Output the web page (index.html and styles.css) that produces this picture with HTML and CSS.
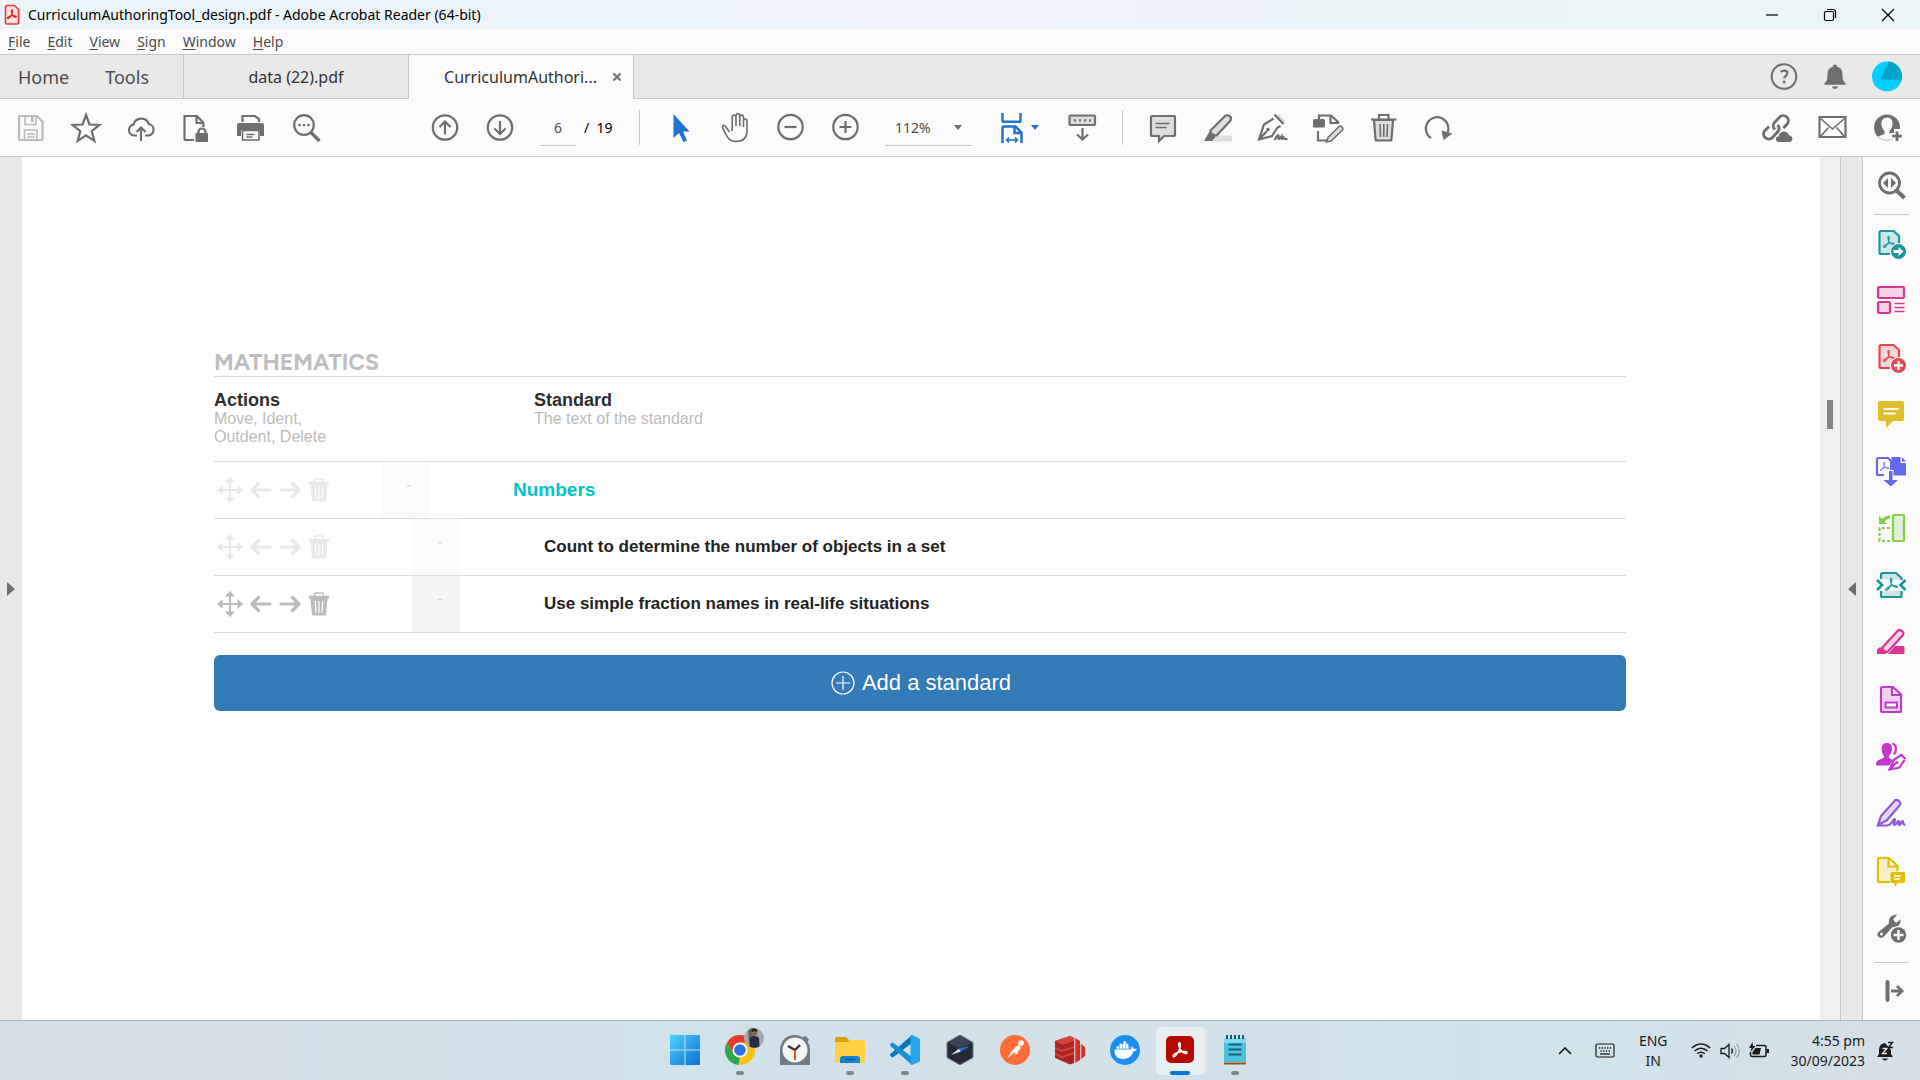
FILE: index.html
```html
<!DOCTYPE html>
<html lang="en">
<head>
    <meta charset="UTF-8">
    <meta name="viewport" content="width=device-width, initial-scale=1.0">
    <title>CurriculumAuthoringTool_design.pdf - Adobe Acrobat Reader (64-bit)</title>
    <link rel="stylesheet" href="styles.css">
</head>
<body>
    <svg class="sprite" aria-hidden="true">
        <symbol id="pdf-mark" viewBox="0 0 16 16">
            <path d="M7.500 1.500c1.300 0 .9 3.700-.3 6.700C6 11 3.500 14.500 2 14c-1.300-1.200 3-4 6.500-4.500 3-.5 6-.2 5.800 1-.3 1.300-3.300.3-5-1.500C7 6.500 6 1.500 7.500 1.500z" fill="none" stroke="currentColor" stroke-width="1.300"/>
        </symbol>
        <symbol id="row-move" viewBox="0 0 26 26">
            <path d="M13 0l5 5.500H8zM13 26l5-5.500H8zM0 13l5.500-5v10zM26 13l-5.500-5v10z"/>
            <path d="M13 4v18M4 13h18" stroke="currentColor" stroke-width="2"/>
        </symbol>
        <symbol id="row-left" viewBox="0 0 22 18">
            <path d="M20 9H3M8.500 2.500L2 9l6.500 6.500" fill="none" stroke="currentColor" stroke-width="3.200" stroke-linecap="round" stroke-linejoin="round"/>
        </symbol>
        <symbol id="row-right" viewBox="0 0 22 18">
            <path d="M2 9h17M13.500 2.500L20 9l-6.500 6.500" fill="none" stroke="currentColor" stroke-width="3.200" stroke-linecap="round" stroke-linejoin="round"/>
        </symbol>
        <symbol id="row-trash" viewBox="0 0 22 24">
            <path d="M6.500 4V2q0-1 1-1h7q1 0 1 1v2" fill="none" stroke="currentColor" stroke-width="1.300"/>
            <path d="M1 3.800h20v3H1zM2.500 6.500h17l-1.300 15.500q-.2 1.500-1.500 1.500H5.300q-1.300 0-1.500-1.500z"/>
            <path d="M7.300 9l.6 11.500M11 9v11.500M14.700 9l-.6 11.500" stroke="#fff" stroke-width="1.200"/>
        </symbol>
    </svg>

    <header class="titlebar">
        <svg class="app-icon" viewBox="0 0 16 22">
            <path d="M2.500 1.500h8l4 4v13q0 1.500-1.500 1.500H3q-1.500 0-1.500-1.500V3q0-1.500 1-1.500z" fill="#ffe3e0" stroke="#f0362b" stroke-width="1.500"/>
            <path d="M8 6c1.200 0 .5 3-.8 5.200C6 13.500 4 15 3.500 14.300c-.4-1 2-2.200 4.500-2.500 2.500-.2 4.500.2 4.400 1-.3 1-2.500.2-3.700-1.200C7.400 10 7 6 8 6z" fill="none" stroke="#e02a20" stroke-width="1.300"/>
        </svg>
        <h1 class="window-title">CurriculumAuthoringTool_design.pdf - Adobe Acrobat Reader (64-bit)</h1>
        <div class="window-controls">
            <button aria-label="Minimize"><svg viewBox="0 0 14 14"><path d="M1 7h12"/></svg></button>
            <button aria-label="Restore"><svg viewBox="0 0 14 14"><rect x="1.500" y="3.500" width="9" height="9" rx="1.500"/><path d="M4 1.500h6q2.500 0 2.500 2.500v6"/></svg></button>
            <button aria-label="Close"><svg viewBox="0 0 14 14"><path d="M1 1l12 12M13 1L1 13"/></svg></button>
        </div>
    </header>

    <nav class="menubar">
        <button><u>F</u>ile</button>
        <button><u>E</u>dit</button>
        <button><u>V</u>iew</button>
        <button><u>S</u>ign</button>
        <button><u>W</u>indow</button>
        <button><u>H</u>elp</button>
    </nav>

    <div class="tabbar">
        <div class="main-tabs">
            <button>Home</button>
            <button>Tools</button>
        </div>
        <button class="doc-tab">data (22).pdf</button>
        <div class="doc-tab active">
            <span>CurriculumAuthori...</span>
            <button class="close-tab" aria-label="Close tab"><svg viewBox="0 0 10 10"><path d="M1.500 1.500l7 7M8.500 1.500l-7 7"/></svg></button>
        </div>
        <div class="account">
            <button aria-label="Help">
                <svg viewBox="0 0 32 32"><circle cx="17" cy="15.500" r="12.300" fill="none" stroke="currentColor" stroke-width="2"/><path d="M13.700 11q1.500-1.300 3.500-1.300 3.200 0 3.200 2.600c0 2.400-3.200 2.600-3.200 5.200" fill="none" stroke="currentColor" stroke-width="2.200"/><circle cx="17.200" cy="21" r="1.500"/></svg>
            </button>
            <button aria-label="Notifications">
                <svg viewBox="0 0 32 32"><path d="M16 3.500q2 0 2 2.200c4 .9 5.500 3.800 5.500 8 0 4.800.8 6.800 3 8.300v1.700h-21V22c2.200-1.500 3-3.500 3-8.300 0-4.200 1.500-7.100 5.500-8q0-2.200 2-2.200zM13 25.500h6q-.5 2.500-3 2.500t-3-2.500z"/></svg>
            </button>
            <button aria-label="Profile">
                <svg viewBox="0 0 32 32"><circle cx="16" cy="15.500" r="15" fill="#00d0ff"/><path d="M17.500.5A15 15 0 0 1 30.800 18L29 21.500q-1-3-3-3H9.500z" fill="#00a3cc"/></svg>
            </button>
        </div>
    </div>

    <div class="toolbar">
        <div class="tools">
            <button class="disabled" aria-label="Save"><svg viewBox="0 0 32 32"><path d="M5 4h17l5.500 5.500V27q0 1-1 1H5q-1 0-1-1V5q0-1 1-1z" fill="none" stroke="currentColor" stroke-width="2.200"/><path d="M10 4v8.500h11V4M9.500 28V18h12.500v10M12 22h8M12 25h8" fill="none" stroke="currentColor" stroke-width="1.600"/><path d="M16 5h2.500v5H16z"/></svg></button>
            <button aria-label="Favourite"><svg viewBox="0 0 32 32"><path d="M16 3l3.500 9.500 10 .4-7.800 6.300 2.700 9.800L16 23.300 7.600 29l2.700-9.800-7.800-6.300 10-.4z" class="line"/></svg></button>
            <button aria-label="Upload"><svg viewBox="0 0 32 32"><path d="M12 23.500H9A5.500 5.500 0 0 1 8.500 12.600 8 8 0 0 1 23.800 12 5.800 5.800 0 0 1 23 23.500h-3M16 29V16M11.500 20l4.500-4.500 4.500 4.500" class="line"/></svg></button>
            <button aria-label="Protect"><svg viewBox="0 0 32 32"><path d="M14 28H6q-1.500 0-1.500-1.500V4h12.500l6.500 7v4M16.500 4v7H23" class="line"/><path d="M18.500 22v-2a3.500 3.500 0 0 1 7 0v2" class="line"/><rect x="15.500" y="21" width="12.500" height="9" rx="1"/></svg></button>
            <button aria-label="Print"><svg viewBox="0 0 32 32"><path d="M7.500 10V4H20l4 3v3" class="line"/><path d="M4 11h23q2 0 2 2v11h-4v-6H6v6H2V13q0-2 2-2z"/><path d="M7.500 18.500H24V28H7.500zM11.500 22.500h8M11.500 25h6" class="line thin"/></svg></button>
            <button aria-label="Find"><svg viewBox="0 0 32 32"><circle cx="14" cy="13" r="9.800" class="line"/><path d="M21 20.500l8.500 8.500" stroke="currentColor" stroke-width="3.200"/><circle cx="9.500" cy="13" r="1.300"/><circle cx="14" cy="13" r="1.300"/><circle cx="18.500" cy="13" r="1.300"/></svg></button>
        </div>
        <div class="tools paging">
            <button aria-label="Previous page"><svg viewBox="0 0 32 32"><circle cx="16" cy="15.500" r="12.200" class="line"/><path d="M16 22.500V10M10.500 15L16 9.500l5.500 5.500" class="line"/></svg></button>
            <button aria-label="Next page"><svg viewBox="0 0 32 32"><circle cx="16" cy="15.500" r="12.200" class="line"/><path d="M16 9v13M10.500 16.500l5.500 5.500 5.500-5.500" class="line"/></svg></button>
            <input class="page-input" type="text" value="6" aria-label="Page number">
            <span class="page-total">/&nbsp; 19</span>
        </div>
        <div class="divider"></div>
        <div class="tools">
            <button class="selected" aria-label="Select"><svg viewBox="0 0 32 32"><path d="M8.500 2v24l5.500-5 4.500 9 3.500-1.500-4-9h6.500z"/></svg></button>
            <button aria-label="Pan"><svg viewBox="0 0 32 32"><path d="M9.500 20L5.500 14.500C3.800 12 1.500 14 3 16.500c3 5 4 13 13 13 8 0 11-4 11-11V9c0-2.500-3.500-2.500-3.500 0v6V5c0-2.500-3.700-2.500-3.700 0v9V3.500c0-2.500-3.800-2.500-3.800 0V14 5c0-2.500-3.800-2.500-3.800 0v14" class="line thin"/></svg></button>
            <button aria-label="Zoom out"><svg viewBox="0 0 32 32"><circle cx="15.500" cy="15" r="12.200" class="line"/><path d="M9.500 15h12" class="line"/></svg></button>
            <button aria-label="Zoom in"><svg viewBox="0 0 32 32"><circle cx="15.500" cy="15" r="12.200" class="line"/><path d="M9.500 15h12M15.500 9v12" class="line"/></svg></button>
        </div>
        <div class="zoom-field">
            <select aria-label="Zoom level"><option>112%</option></select>
            <svg class="caret" viewBox="0 0 8 5"><path d="M0 0h8L4 5z"/></svg>
        </div>
        <button class="fit selected" aria-label="Fit width">
            <svg viewBox="0 0 32 32"><path d="M6.500 1v7.500q0 1.300 1.300 1.300h15.400q1.300 0 1.300-1.300V1M6.500 31V16q0-1.500 1.500-1.500h11.500l6 6V31M18.500 14.500v6.500h6" fill="none" stroke="currentColor" stroke-width="2.500"/><path d="M11 28h10M13 25.500L10.500 28l2.500 2.500M19 25.500l2.500 2.500-2.500 2.500" fill="none" stroke="currentColor" stroke-width="1.600"/></svg>
            <svg class="caret" viewBox="0 0 8 5"><path d="M0 0h8L4 5z"/></svg>
        </button>
        <div class="tools">
            <button aria-label="Scrolling"><svg viewBox="0 0 32 32"><rect x="2.500" y="3.500" width="25.500" height="9.500" rx="1" class="line tint"/><path d="M7 8.300h2M12 8.300h2M17 8.300h2M22 8.300h2M15.500 16v11.500M10 22.500l5.500 5 5.500-5" class="line"/></svg></button>
        </div>
        <div class="divider"></div>
        <div class="tools">
            <button aria-label="Comment"><svg viewBox="0 0 32 32"><path d="M5.500 4h21q1.500 0 1.500 1.500v17q0 1.500-1.500 1.500H17l-5 5v-5H5.500Q4 24 4 22.500v-17Q4 4 5.500 4z" class="line tint"/><path d="M8.500 11.500h14M8.500 15.500h11" class="line thin"/></svg></button>
            <button aria-label="Highlight"><svg viewBox="0 0 32 32"><path d="M13 23.500h17v6H10z" fill="#dedede"/><path d="M8.500 18.500L23 4q2-1.500 4.500 0t1 4.500L15 23q-2 1-4.500-.5t-2-4z" class="line tint"/><path d="M7.500 19.500l6 5.500-3.500 4H2z"/></svg></button>
            <button aria-label="Sign"><svg viewBox="0 0 32 32"><path d="M19 4l7.500 8 2-3-6-6.500z" fill="#dedede"/><path d="M17.500 2.500l9 9.500M16.500 6.500L7 12.500 2 27.500l13-3.500 5.500-8.500 3-1.500M2.500 27l7.500-8" class="line"/><circle cx="11" cy="17.500" r="1.800"/><path d="M17.500 28c2-3 4.500-7 4-3.500-.5 4 1.500 2 3 0 0 4 1.500 2.500 2 0 .3 2.500 1.500 3 4 2.500" class="line"/></svg></button>
            <button aria-label="Edit"><svg viewBox="0 0 32 32"><path d="M7 7V3.500h12l7 6.500v2M18.500 3.500V11H25M6 19v9.500h9" class="line"/><rect x="1" y="7" width="12" height="8.500" rx="1.500"/><path d="M16 25.500L27 14.500q1.500-1 3 .5t.5 3L19 29l-4.500 1z" class="line thin tint"/></svg></button>
            <button aria-label="Delete"><svg viewBox="0 0 32 32"><path d="M7 8l1.500 19q0 1.500 1.500 1.500h13q1.500 0 1.500-1.500L26 8z" class="line tint"/><path d="M4 7.500h25.500M12 6.500V3h9.500v3.500" class="line"/><path d="M13 12l.5 13M16.800 12v13M20.500 12L20 25" class="line thin"/></svg></button>
            <button aria-label="Rotate"><svg viewBox="0 0 32 32"><path d="M9 26A11.300 11.300 0 1 1 25.500 21" class="line"/><path d="M19.500 18.500l11 3-9 6.500z"/></svg></button>
        </div>
        <div class="tools share">
            <button aria-label="Share link"><svg viewBox="0 0 32 32"><path d="M13 17.500a5 5 0 0 1-.5-7l5-5.200a5 5 0 0 1 7.500 7l-3.500 3.700M15.500 13a5 5 0 0 1 .5 6.500l-5.500 6a5 5 0 0 1-7.500-7l4-4" class="line heavy"/><path d="M17 30c-4 0-4.500-5.500-.5-5.500 1-6.500 9-6.500 10.500-1.200 4.500.5 4.500 6.700 0 6.700z"/></svg></button>
            <button aria-label="Email"><svg viewBox="0 0 32 32"><path d="M2.500 5h26v20h-26z" class="line"/><path d="M3.500 6.500l12 10.500 12-10.500M3.500 24.500l8-9M27.500 24.500l-8-9" class="line thin"/></svg></button>
            <button aria-label="Invite"><svg viewBox="0 0 32 32"><circle cx="15" cy="15.500" r="13"/><path d="M15 5.500c-4 0-6 3-5.500 7 .3 3 1.300 5 3 6.500v3L6 24.500Q9.500 28 15 28q4 0 6-1.500v-3L17.500 22v-3c1.700-1.500 2.700-3.500 3-6.500.5-4-1.500-7-5.500-7z" fill="#fbfbfb"/><path d="M25 17v14M18 24h14" stroke="#fbfbfb" stroke-width="6"/><path d="M25 19.500V29M20.200 24.200h9.600" class="line heavy"/></svg></button>
        </div>
    </div>

    <div class="workspace">
        <button class="pane-toggle left" aria-label="Show navigation pane"><svg viewBox="0 0 8 14"><path d="M0 0l8 7-8 7z"/></svg></button>

        <main class="page">
            <h2 class="subject">MATHEMATICS</h2>
            <table class="standards">
                <thead>
                    <tr>
                        <th class="actions-head">Actions<small>Move, Ident,<br>Outdent, Delete</small></th>
                        <th class="standard-head">Standard<small>The text of the standard</small></th>
                    </tr>
                </thead>
                <tbody>
                    <tr class="faded">
                        <td>
                            <div class="row-actions">
                                <button aria-label="Move"><svg class="move"><use href="#row-move"/></svg></button>
                                <button aria-label="Outdent"><svg class="arrow"><use href="#row-left"/></svg></button>
                                <button aria-label="Indent"><svg class="arrow"><use href="#row-right"/></svg></button>
                                <button aria-label="Delete"><svg class="trash"><use href="#row-trash"/></svg></button>
                            </div>
                        </td>
                        <td>
                            <div class="entry level-1"><span class="handle">-</span><span class="text">Numbers</span></div>
                        </td>
                    </tr>
                    <tr class="faded">
                        <td>
                            <div class="row-actions">
                                <button aria-label="Move"><svg class="move"><use href="#row-move"/></svg></button>
                                <button aria-label="Outdent"><svg class="arrow"><use href="#row-left"/></svg></button>
                                <button aria-label="Indent"><svg class="arrow"><use href="#row-right"/></svg></button>
                                <button aria-label="Delete"><svg class="trash"><use href="#row-trash"/></svg></button>
                            </div>
                        </td>
                        <td>
                            <div class="entry level-2"><span class="handle">-</span><span class="text">Count to determine the number of objects in a set</span></div>
                        </td>
                    </tr>
                    <tr>
                        <td>
                            <div class="row-actions">
                                <button aria-label="Move"><svg class="move"><use href="#row-move"/></svg></button>
                                <button aria-label="Outdent"><svg class="arrow"><use href="#row-left"/></svg></button>
                                <button aria-label="Indent"><svg class="arrow"><use href="#row-right"/></svg></button>
                                <button aria-label="Delete"><svg class="trash"><use href="#row-trash"/></svg></button>
                            </div>
                        </td>
                        <td>
                            <div class="entry level-2"><span class="handle">-</span><span class="text">Use simple fraction names in real-life situations</span></div>
                        </td>
                    </tr>
                </tbody>
            </table>
            <button class="add-standard">
                <svg viewBox="0 0 24 24"><circle cx="12" cy="12" r="11"/><path d="M12 5v14M5 12h14"/></svg>
                Add a standard
            </button>
        </main>

        <div class="scrollbar"><div class="thumb"></div></div>
        <button class="pane-toggle right" aria-label="Hide tools pane"><svg viewBox="0 0 8 14"><path d="M8 0L0 7l8 7z"/></svg></button>

        <aside class="tool-pane">
            <button aria-label="Search tools"><svg viewBox="0 0 32 32"><circle cx="14.500" cy="14" r="10" class="line heavy"/><path d="M21.500 21.500l8 7.500" stroke="currentColor" stroke-width="4"/><path d="M13 9v10l-5-5zM16 9v10l5-5z"/></svg></button>
            <hr>
            <button class="teal" aria-label="Export PDF"><svg viewBox="0 0 32 32"><path d="M15 27H6q-1.500 0-1.500-1.500v-20Q4.500 4 6 4h12.500l5.500 5v8" class="line tone"/><svg x="7" y="8" width="14" height="14"><use href="#pdf-mark"/></svg><circle cx="23.500" cy="24.500" r="8.500" fill="#fbfbfb"/><circle cx="23.500" cy="24.500" r="7.500"/><path d="M18.500 23h5v-3l5 4.500-5 4.500v-3h-5z" fill="#fff"/></svg></button>
            <button class="pink" aria-label="Organize pages"><svg viewBox="0 0 32 32"><rect x="3" y="3" width="26" height="11" rx="1" class="line tone"/><rect x="3" y="18" width="12" height="11" rx="1" class="line tone"/><path d="M19.500 19.500h10M19.500 23.500h10M19.500 27.500h10" class="line thin"/></svg></button>
            <button class="red" aria-label="Create PDF"><svg viewBox="0 0 32 32"><path d="M15 27H6q-1.500 0-1.500-1.500v-20Q4.500 4 6 4h12.500l5.500 5v8" class="line tone"/><svg x="7" y="8" width="14" height="14"><use href="#pdf-mark"/></svg><circle cx="23.500" cy="24.500" r="8.500" fill="#fbfbfb"/><circle cx="23.500" cy="24.500" r="7.500"/><path d="M23.500 20v9M19 24.500h9" stroke="#fff" stroke-width="2.500"/></svg></button>
            <button class="yellow" aria-label="Comment"><svg viewBox="0 0 32 32"><path d="M5 3h22q2 0 2 2v16q0 2-2 2h-9l-7 7v-7H5q-2 0-2-2V5q0-2 2-2z"/><path d="M8.500 11h15M8.500 15.500h12" stroke="#fff" stroke-width="2"/></svg></button>
            <button class="indigo" aria-label="Combine files"><svg viewBox="0 0 32 32"><path d="M16.500 2h9v6H31v12.500H16.500zM27 2l4 4.500h-4z"/><path d="M9 20H3.500Q2 20 2 18.500V4.500Q2 3 3.500 3H13l3 3v13" class="line paper"/><svg x="4" y="6" width="11" height="11"><use href="#pdf-mark"/></svg><path d="M12.500 15h6v15h-6z" fill="#fbfbfb"/><path d="M14 16h3.500v9H23l-7.200 6.500L8.500 25H14z"/></svg></button>
            <button class="green" aria-label="Compare files"><svg viewBox="0 0 32 32"><rect x="18" y="3" width="11" height="26" rx="1" class="line tone"/><path d="M15 16H4.500v13H15" class="line" stroke-dasharray="3 2.200"/><path d="M4 4v8h8L9.500 9.500Q11 7.500 15 6V3q-5 1-8 3.800z"/></svg></button>
            <button class="teal" aria-label="Compress PDF"><svg viewBox="0 0 32 32"><path d="M6 10V5.500Q6 4 7.500 4H21l5.500 5v2M6 22v4.500Q6 28 7.500 28H25q1.500 0 1.500-1.500V22" class="line tone"/><svg x="9" y="8" width="15" height="15"><use href="#pdf-mark"/></svg><path d="M2 11l5 5-5 5M30.500 11l-5 5 5 5" class="line heavy"/></svg></button>
            <button class="pink" aria-label="Redact"><svg viewBox="0 0 32 32"><path d="M7 22L22.500 5q2-2 4.500 0t.5 4.500L12.500 26q-3 .5-5.500-4z" class="line tone"/><path d="M5 21l6.500 7H2v-4.500zM20 20h8q1.500 0 1.500 1.500V28H13z"/></svg></button>
            <button class="magenta" aria-label="Prepare form"><svg viewBox="0 0 32 32"><path d="M7.500 4H18l8 7.500v16q0 1.500-1.500 1.500h-17Q6 29 6 27.500v-22Q6 4 7.500 4zM17 4.500V12h8" class="line tone"/><path d="M10.500 19.500h11.500v5H10.500z" fill="#fff" stroke="currentColor" stroke-width="2"/></svg></button>
            <button class="magenta" aria-label="Request signatures"><svg viewBox="0 0 32 32"><path d="M12 3c4 0 5.500 3 5 6.500-.3 3-1.500 5-3 6.500v2l4 2-4 5.500H1c0-4 1-5 5-6.500l3-1.500V16c-1.500-1.500-2-3.500-2.300-6.500C6.300 6 8 3 12 3z"/><path d="M17.500 3.500c4 1 4.500 7 1.500 11" class="line"/><path d="M30.500 19l-5-5M26 15.500l-7 4L14.500 29.500l10-2 5-7.500M15 29l6-6" class="line"/><circle cx="22" cy="22.500" r="1.500"/></svg></button>
            <button class="purple" aria-label="Fill and sign"><svg viewBox="0 0 32 32"><path d="M3 28l3-9L19.500 4q2-2 4.500 0t.5 4.500L11.500 23.500z" class="line tone"/><path d="M3 28.500h9c4 0 6-6 7.500-6.500 2 0-2.500 6 0 6s2-4 4-4-1 4.500 1 4 1.500-4 3-4-1 4 3 3.500" class="line"/></svg></button>
            <button class="gold" aria-label="Send for comments"><svg viewBox="0 0 32 32"><path d="M15 28H4.500Q3 28 3 26.500v-21Q3 4 4.500 4H14l8.500 8v5M13.500 4v8.500H22" class="line tone"/><path d="M17 18h11.500q1.500 0 1.500 1.500v8q0 1.500-1.500 1.500H23l-3.500 3.500V29H17q-1.500 0-1.500-1.500v-8Q15.500 18 17 18z"/><path d="M19 22h7M19 25h6" stroke="#fff" stroke-width="1.500"/></svg></button>
            <button aria-label="More tools"><svg viewBox="0 0 32 32"><path d="M3.500 21L14 12.500c-1-5 3-9.500 8-8.500l-4 4.500 3 3.500 4.500-3.500c.5 5-3 8.500-8 7.500L9 25.500c-3 3.500-9-.5-5.500-4.500z"/><circle cx="6.500" cy="23" r="1.500" fill="#fbfbfb"/><circle cx="23.500" cy="24" r="9" fill="#fbfbfb"/><circle cx="23.500" cy="24" r="7.700"/><path d="M23.500 19v10M18.500 24h10" stroke="#fff" stroke-width="2.500"/></svg></button>
            <hr class="last">
            <button aria-label="Collapse"><svg viewBox="0 0 32 32"><path d="M12.500 7v18" stroke="currentColor" stroke-width="4" stroke-linecap="round"/><path d="M16 16h11M22 11l5 5-5 5" class="line heavy"/></svg></button>
        </aside>
    </div>

    <footer class="taskbar">
        <div class="apps">
            <button aria-label="Start"><svg viewBox="0 0 30 30"><defs><linearGradient id="win" x2="1" y2="1"><stop stop-color="#4fd2ff"/><stop offset="1" stop-color="#0a6fd0"/></linearGradient></defs><path d="M0 1q0-1 1-1h13.500v14.500H0zM15.500 0H29q1 0 1 1v13.500H15.500zM0 15.500h14.500V30H1q-1 0-1-1zM15.500 15.500H30V29q0 1-1 1H15.500z" fill="url(#win)"/></svg></button>
            <button class="open" aria-label="Chrome">
                <svg viewBox="0 0 30 30"><circle cx="15" cy="15" r="15" fill="#fbc116"/><path d="M2 7.500A15 15 0 0 1 28 7.500H15L8.500 18.700z" fill="#e33b2e"/><path d="M2 7.500L8.500 18.700q2 3.300 6.500 3.800L13.500 30A15 15 0 0 1 2 7.500z" fill="#2da94f"/><circle cx="15" cy="15" r="7.500" fill="#fff"/><circle cx="15" cy="15" r="5.800" fill="#2f6fe4"/></svg>
                <svg class="badge" viewBox="0 0 20 20"><circle cx="10" cy="10" r="10" fill="#a8aaa6"/><path d="M4 3q3-4 6-3v18q-3 0-5-3z" fill="#63665f"/><circle cx="10.500" cy="5" r="2.800" fill="#8c6858"/><path d="M7.500 4q0-3.500 3-3.500t3 3.500l-3-1z" fill="#221c1f"/><path d="M5.500 18.500L6 10q1-2 4.500-2t4.500 2l.5 8.500q-5 2.500-10 0z" fill="#252c48"/></svg>
            </button>
            <button aria-label="Clock"><svg viewBox="0 0 30 30"><path d="M0 30V14Q2 0 15 0q5 0 8 2.500l2-2 4 4-1.500 2Q30 10 30 14v16z" fill="#717b84"/><circle cx="15" cy="15" r="12.500" fill="#f5f5f5"/><path d="M8 11l7 4 5-5" fill="none" stroke="#333" stroke-width="2.400"/><path d="M15 15v10" stroke="#d94e1f" stroke-width="2"/></svg></button>
            <button class="open" aria-label="File Explorer"><svg viewBox="0 0 30 30"><path d="M0 4q0-2 2-2h9l4 4v6H0z" fill="#dc9f0a"/><path d="M0 7h12l3-2h13q2 0 2 2v19q0 2-2 2H2q-2 0-2-2z" fill="#ffd044"/><path d="M5 28v-4q0-3 3-3h14q3 0 3 3v4z" fill="#1583d0"/><path d="M10 24.500h10" stroke="#0b5a9b" stroke-width="1.500"/></svg></button>
            <button class="open" aria-label="Visual Studio Code"><svg viewBox="0 0 30 30"><path d="M22 0v8L3.500 22q-1 .8-2 0L.4 21q-.8-1 0-2z" fill="#0878bd"/><path d="M22 30v-8L3.500 8q-1-.8-2 0L.4 9q-.8 1 0 2z" fill="#168fd5"/><path d="M22 0l7 3.200q1 .5 1 1.600v20.400q0 1.100-1 1.600L22 30q-1.500 0-1.500-1.500v-27Q20.500 0 22 0z" fill="#27a5ee"/></svg></button>
            <button aria-label="Compass"><svg viewBox="0 0 30 30"><path d="M15 0l13 7.500v15L15 30 2 22.500v-15z" fill="#262a37" stroke="#747986"/><path d="M15 1l12 7-12 5L3 8z" fill="#3b4357"/><path d="M6 20l8-6.500 2 3z" fill="#d7dce5"/><path d="M14 13.500L25 11l-9 5.500z" fill="#1577e8"/></svg></button>
            <button aria-label="Postman"><svg viewBox="0 0 30 30"><circle cx="15" cy="15" r="15" fill="#ff6c37"/><circle cx="21" cy="8" r="2.800" fill="#fff"/><path d="M18 10l3.500 2.500-4 4.500-2-.5L7 23.500l5-8zM15 15l3.500 3-3 2z" fill="#fff"/></svg></button>
            <button aria-label="Redis"><svg viewBox="0 0 30 30"><path d="M0 6l15-5 4 2v25l-4 1.500L0 23z" fill="#a92422"/><path d="M0 6l15-5 4 2v3L7 10zM0 12l7 3 12-4v2L7 17l-7-3zM0 18l7 3 12-4v2L7 23l-7-3z" fill="#d9413b"/><path d="M20 3l5 3v19l-5 3zM26 9l4 3v9l-4 3z" fill="#c9302c"/><path d="M20 3v25M26 9v15" stroke="#ef837d"/></svg></button>
            <button aria-label="Docker"><svg viewBox="0 0 30 30"><circle cx="15" cy="15" r="15" fill="#1c8fed"/><path d="M4.500 14.500H21q1-1 .5-3.500 2 .8 2.200 3 1.800-.5 3.300.3-1 2-3.500 2C22 21.500 18 24 13 24c-6 0-9-4-8.500-9.500z" fill="#fff"/><path d="M6.500 12.500h13M9.500 10h9M13.500 7.500h3" stroke="#fff" stroke-width="2.300" stroke-dasharray="2.600 .5"/></svg></button>
            <button class="current" aria-label="Adobe Acrobat"><svg viewBox="0 0 30 30"><rect x="1" y="1" width="28" height="27" rx="5" fill="#b30b00"/><svg x="6" y="6" width="18" height="18" color="#fff"><use href="#pdf-mark"/></svg></svg></button>
            <button class="open" aria-label="Notepad"><svg viewBox="0 0 30 30"><path d="M4 3h22v24H4z" fill="#4dc2df"/><path d="M4 3h22v5H4z" fill="#7bdcf0"/><path d="M7 0v4M11 0v4M15 0v4M19 0v4M23 0v4" stroke="#125f75" stroke-width="2"/><path d="M8.500 9.500h13M8.500 14.500h13M8.500 19.500h13" stroke="#176579" stroke-width="1.800"/><path d="M4 27.500h22v2H4z" fill="#9a520f"/></svg></button>
        </div>
        <div class="tray">
            <button class="chevron" aria-label="Hidden icons"><svg viewBox="0 0 20 20"><path d="M4 13l6-6 6 6" fill="none" stroke="currentColor" stroke-width="1.700"/></svg></button>
            <button class="keyboard" aria-label="Touch keyboard"><svg viewBox="0 0 20 20"><rect x="1" y="3" width="18" height="13" rx="1.500" fill="none" stroke="currentColor" stroke-width="1.200"/><path d="M4 7h13M5.500 10h10" stroke="currentColor" stroke-width="1.300" stroke-dasharray="1.300 1.400"/><path d="M5 13h10" stroke="currentColor" stroke-width="1.300"/></svg></button>
            <button class="language">ENG<br>IN</button>
            <button class="status" aria-label="Network, volume and battery">
                <svg viewBox="0 0 20 20"><path d="M.8 7q9.200-8 18.400 0M3.500 10q6.500-5.500 13 0M6.200 12.800q3.800-3.200 7.600 0" fill="none" stroke="currentColor" stroke-width="1.500"/><circle cx="10" cy="15" r="1.700"/></svg>
                <svg viewBox="0 0 20 20"><path d="M1 7.500h3.500L9 3.500v13l-4.500-4H1zM11.500 7.500q2 2.500 0 5" fill="none" stroke="currentColor" stroke-width="1.300"/><path d="M14 5q4 5 0 10M16.500 3q5.500 7 0 14" fill="none" stroke="#8e9ba3" stroke-width="1.200"/></svg>
                <svg viewBox="0 0 20 20"><path d="M7 4.500h8.500q1.500 0 1.500 1.500v8q0 1.500-1.500 1.500H3q-1.500 0-1.500-1.500v-3" fill="none" stroke="currentColor" stroke-width="1.500"/><path d="M6.500 7H12l-1.500 6.500H3.500V11zM17.500 8H20v4h-2.500zM3.500 1L0 7h2.500L1.500 11 6.500 5H4z"/></svg>
            </button>
            <button class="clock">4:55 pm<br>30/09/2023</button>
            <button class="focus" aria-label="Notifications"><svg viewBox="0 0 20 20"><path d="M9 2q-6 .5-6 7v4L1 16h16l-2-3V9zM6 17.500h6q-1 2-3 2t-3-2z"/><path d="M6.500 7.500H11l-4.500 5H11" fill="none" stroke="#dbe5eb" stroke-width="1.300"/><path d="M12 1.500h4.500L12.500 6.500H17" fill="none" stroke="currentColor" stroke-width="1.400"/></svg></button>
        </div>
    </footer>
</body>
</html>
```

FILE: styles.css
```css
* {
    box-sizing: border-box;
}
body {
    font-family: 'Noto Sans', 'Open Sans', sans-serif;
    margin: 0;
    min-height: 100vh;
    display: flex;
    flex-direction: column;
    background: #fbfbfb;
    color: #000;
    font-size: 14px;
}
button {
    border: 0;
    padding: 0;
    background: none;
    font: inherit;
    color: inherit;
}
svg {
    fill: currentColor;
    flex-shrink: 0;
}
.sprite {
    position: absolute;
    width: 0;
    height: 0;
}
.line {
    fill: none;
    stroke: currentColor;
    stroke-width: 2.2;
}
.thin {
    stroke-width: 1.6;
}
.heavy {
    stroke-width: 2.8;
}
.tint {
    fill: #dedede;
}
.tone {
    fill: currentColor;
    fill-opacity: 0.2;
}
.paper {
    fill: #fbfbfb;
}

/* Title bar and menu */
.titlebar {
    display: flex;
    align-items: center;
    height: 29px;
    padding: 0 3px 0 4px;
    background: linear-gradient(90deg, #ebf5fa, #edf3f9 50%, #ebf4f7);
}
.app-icon {
    width: 16px;
    height: 22px;
    margin-right: 8px;
}
.window-title {
    margin: 0;
    font-size: 14px;
    font-weight: 400;
}
.window-controls {
    display: flex;
    margin-left: auto;
}
.window-controls button {
    display: flex;
    align-items: center;
    justify-content: center;
    width: 58px;
    height: 29px;
}
.window-controls svg {
    width: 14px;
    height: 14px;
    fill: none;
    stroke: #000;
    stroke-width: 1.2;
}
.menubar {
    display: flex;
    gap: 17px;
    height: 25px;
    padding: 0 8px;
    color: #4b4b4b;
}
.menubar u {
    text-underline-offset: 2px;
}

/* Tabs */
.tabbar {
    display: flex;
    height: 45px;
    border-top: 1px solid #c8c8c8;
    background: #e9e9e9;
    box-shadow: inset 0 -1px #c8c8c8;
    color: #4b4b4b;
}
.main-tabs {
    display: flex;
    gap: 36px;
    width: 183px;
    padding-left: 18px;
    font-size: 18px;
}
.doc-tab {
    display: flex;
    align-items: center;
    justify-content: center;
    width: 225px;
    border-left: 1px solid #c8c8c8;
    color: #323232;
    font-size: 16px;
}
.doc-tab.active {
    gap: 15px;
    width: 226px;
    padding-left: 24px;
    border-right: 1px solid #c8c8c8;
    background: #fbfbfb;
}
.close-tab svg {
    display: block;
    width: 10px;
    height: 10px;
    stroke: #6e6e6e;
    stroke-width: 2;
}
.account {
    display: flex;
    align-items: center;
    gap: 20px;
    margin-left: auto;
    padding-right: 17px;
    color: #6e6e6e;
}
.account svg {
    display: block;
    width: 32px;
    height: 32px;
}

/* Toolbar */
.toolbar {
    display: flex;
    align-items: center;
    height: 58px;
    padding: 0 5px 0 3px;
    border-bottom: 1px solid #c8c8c8;
    color: #6e6e6e;
}
.tools {
    display: flex;
    align-items: center;
}
.tools button {
    display: flex;
    justify-content: center;
    width: 55px;
}
.tools svg {
    width: 32px;
    height: 32px;
}
.toolbar .disabled {
    color: #b9b9b9;
}
.toolbar .selected {
    color: #1f73cc;
}
.paging {
    width: 222px;
    margin-left: 84px;
}
.page-input {
    width: 36px;
    height: 36px;
    margin: 0 8px 0 13px;
    padding: 0;
    border: 0;
    border-bottom: 1px solid #c8c8c8;
    background: none;
    color: #4b4b4b;
    font: inherit;
    text-align: center;
}
.page-total {
    color: #000;
}
.divider {
    width: 1px;
    height: 35px;
    margin: 0 12px;
    background: #c8c8c8;
}
.paging + .divider {
    margin: 0 13px 0 0;
}
.zoom-field {
    display: flex;
    align-items: center;
    width: 87px;
    margin-left: 12px;
    border-bottom: 1px solid #c8c8c8;
}
.zoom-field select {
    appearance: none;
    flex: 1;
    width: 60px;
    height: 35px;
    padding: 0 0 0 10px;
    border: 0;
    background: none;
    color: #4b4b4b;
    font: inherit;
}
.caret {
    width: 8px;
    height: 5px;
}
.zoom-field .caret {
    margin-right: 10px;
}
.fit {
    display: flex;
    align-items: center;
    gap: 3px;
    width: 83px;
    padding-left: 24px;
}
.fit svg:first-child {
    width: 32px;
    height: 32px;
}
.share {
    margin-left: auto;
}

/* Document area */
.workspace {
    display: flex;
    flex: 1;
}
.pane-toggle {
    display: flex;
    align-items: center;
    justify-content: center;
    width: 22px;
    background: #e9e9e9;
    color: #6e6e6e;
}
.pane-toggle svg {
    width: 8px;
    height: 14px;
}
.pane-toggle.right {
    width: 23px;
    border: solid #c8c8c8;
    border-width: 0 1px;
}
.page {
    flex: 1;
    padding: 192px 194px 0 192px;
    background: #fff;
    font-family: 'Liberation Sans', Arial, sans-serif;
}
.subject {
    margin: 0;
    color: #bdbdbd;
    font-family: Figtree, Lato, sans-serif;
    font-size: 23px;
    font-weight: 700;
    line-height: 27px;
}
.standards {
    width: 100%;
    border-collapse: collapse;
    border-top: 1px solid #dcdcdc;
}
.standards tr {
    border-bottom: 1px solid #dcdcdc;
}
.standards th {
    height: 85px;
    padding: 13px 0 0;
    color: #2e2e2e;
    font-size: 18px;
    line-height: 20px;
    text-align: left;
    vertical-align: top;
}
.standards small {
    display: block;
    color: #bbb;
    font-size: 16px;
    font-weight: 400;
    line-height: 18px;
}
.standards .actions-head {
    width: 167px;
}
.standards .standard-head {
    padding-left: 153px;
}
.standards td {
    height: 57px;
    padding: 0;
}
.row-actions {
    display: flex;
    align-items: center;
    gap: 7px;
    padding-left: 3px;
    color: #bbb;
}
.row-actions svg {
    display: block;
}
.faded .row-actions {
    color: #e9e9e9;
}
.move {
    width: 26px;
    height: 26px;
}
.arrow {
    width: 22px;
    height: 18px;
}
.trash {
    width: 22px;
    height: 24px;
}
.entry {
    display: flex;
    align-items: center;
    height: 56px;
    color: #222;
    font-size: 17px;
    font-weight: 700;
}
.level-1 {
    color: #00c4c8;
    font-size: 19px;
}
.level-2 {
    padding-left: 31px;
}
.handle {
    width: 48px;
    height: 56px;
    margin-right: 84px;
    padding-left: 8px;
    background: #f4f4f4;
    color: #d5d5d5;
    font-size: 16px;
    font-weight: 400;
    line-height: 46px;
    text-align: center;
}
.faded .handle {
    background: #fafafa;
}
.add-standard {
    display: flex;
    align-items: center;
    justify-content: center;
    gap: 7px;
    width: 100%;
    height: 56px;
    margin-top: 22px;
    padding-left: 2px;
    border-radius: 6px;
    background: #337ab7;
    color: #fff;
    font-size: 22px;
}
.add-standard svg {
    width: 24px;
    height: 24px;
    fill: none;
    stroke: #fff;
    stroke-width: 1.2;
}
.scrollbar {
    width: 20px;
    padding: 243px 7px 0;
    background: #f0f0f0;
}
.thumb {
    height: 29px;
    background: #868686;
}

/* Tool pane */
.tool-pane {
    display: flex;
    flex-direction: column;
    width: 57px;
    color: #6e6e6e;
}
.tool-pane button {
    display: flex;
    align-items: center;
    justify-content: center;
    height: 57px;
    padding: 0 2px 2px 0;
}
.tool-pane button > svg {
    width: 32px;
    height: 32px;
}
.tool-pane hr {
    width: 35px;
    margin: 0 11px;
    border: 0;
    border-top: 1px solid #c8c8c8;
}
.tool-pane .last {
    margin-top: 6px;
}
.teal { color: #1d979c; }
.pink { color: #d9368f; }
.red { color: #e34850; }
.yellow { color: #dfbf2c; }
.indigo { color: #6767ec; }
.green { color: #84cf43; }
.magenta { color: #c038cc; }
.purple { color: #9256d9; }
.gold { color: #dfbf00; }

/* Taskbar */
.taskbar {
    display: grid;
    grid-template-columns: 1fr auto 1fr;
    align-items: center;
    height: 60px;
    border-top: 1px solid #a9b5bc;
    background: linear-gradient(90deg, #d6dde6, #d0e2ea 35%, #d3e0e8 55%, #cfe3eb 80%, #d6dfe7);
    color: #1b1b1b;
}
.apps {
    display: flex;
    grid-column: 2;
    gap: 7px;
}
.apps button {
    position: relative;
    display: flex;
    align-items: center;
    justify-content: center;
    width: 48px;
    height: 48px;
    padding-bottom: 2px;
    border-radius: 5px;
}
.apps button > svg {
    width: 30px;
    height: 30px;
}
.apps button > .badge {
    position: absolute;
    top: 1px;
    right: 0;
    width: 20px;
    height: 20px;
}
.apps .current {
    background: #e8f0f4;
    box-shadow: 3px 0 #dfe9ef;
}
.open::after,
.current::after {
    content: '';
    position: absolute;
    bottom: 0;
    width: 8px;
    height: 4px;
    border-radius: 2px;
    background: #7f868a;
}
.current::after {
    width: 20px;
    background: #0078d7;
}
.tray {
    display: flex;
    align-items: center;
    justify-content: flex-end;
    padding-right: 24px;
    line-height: 20px;
}
.tray svg {
    display: block;
    width: 20px;
    height: 20px;
}
.keyboard {
    margin: 0 24px 0 20px;
}
.status {
    display: flex;
    gap: 9px;
    margin: 0 22px 0 23px;
}
.clock {
    text-align: right;
}
.focus {
    margin-left: 11px;
}
```
